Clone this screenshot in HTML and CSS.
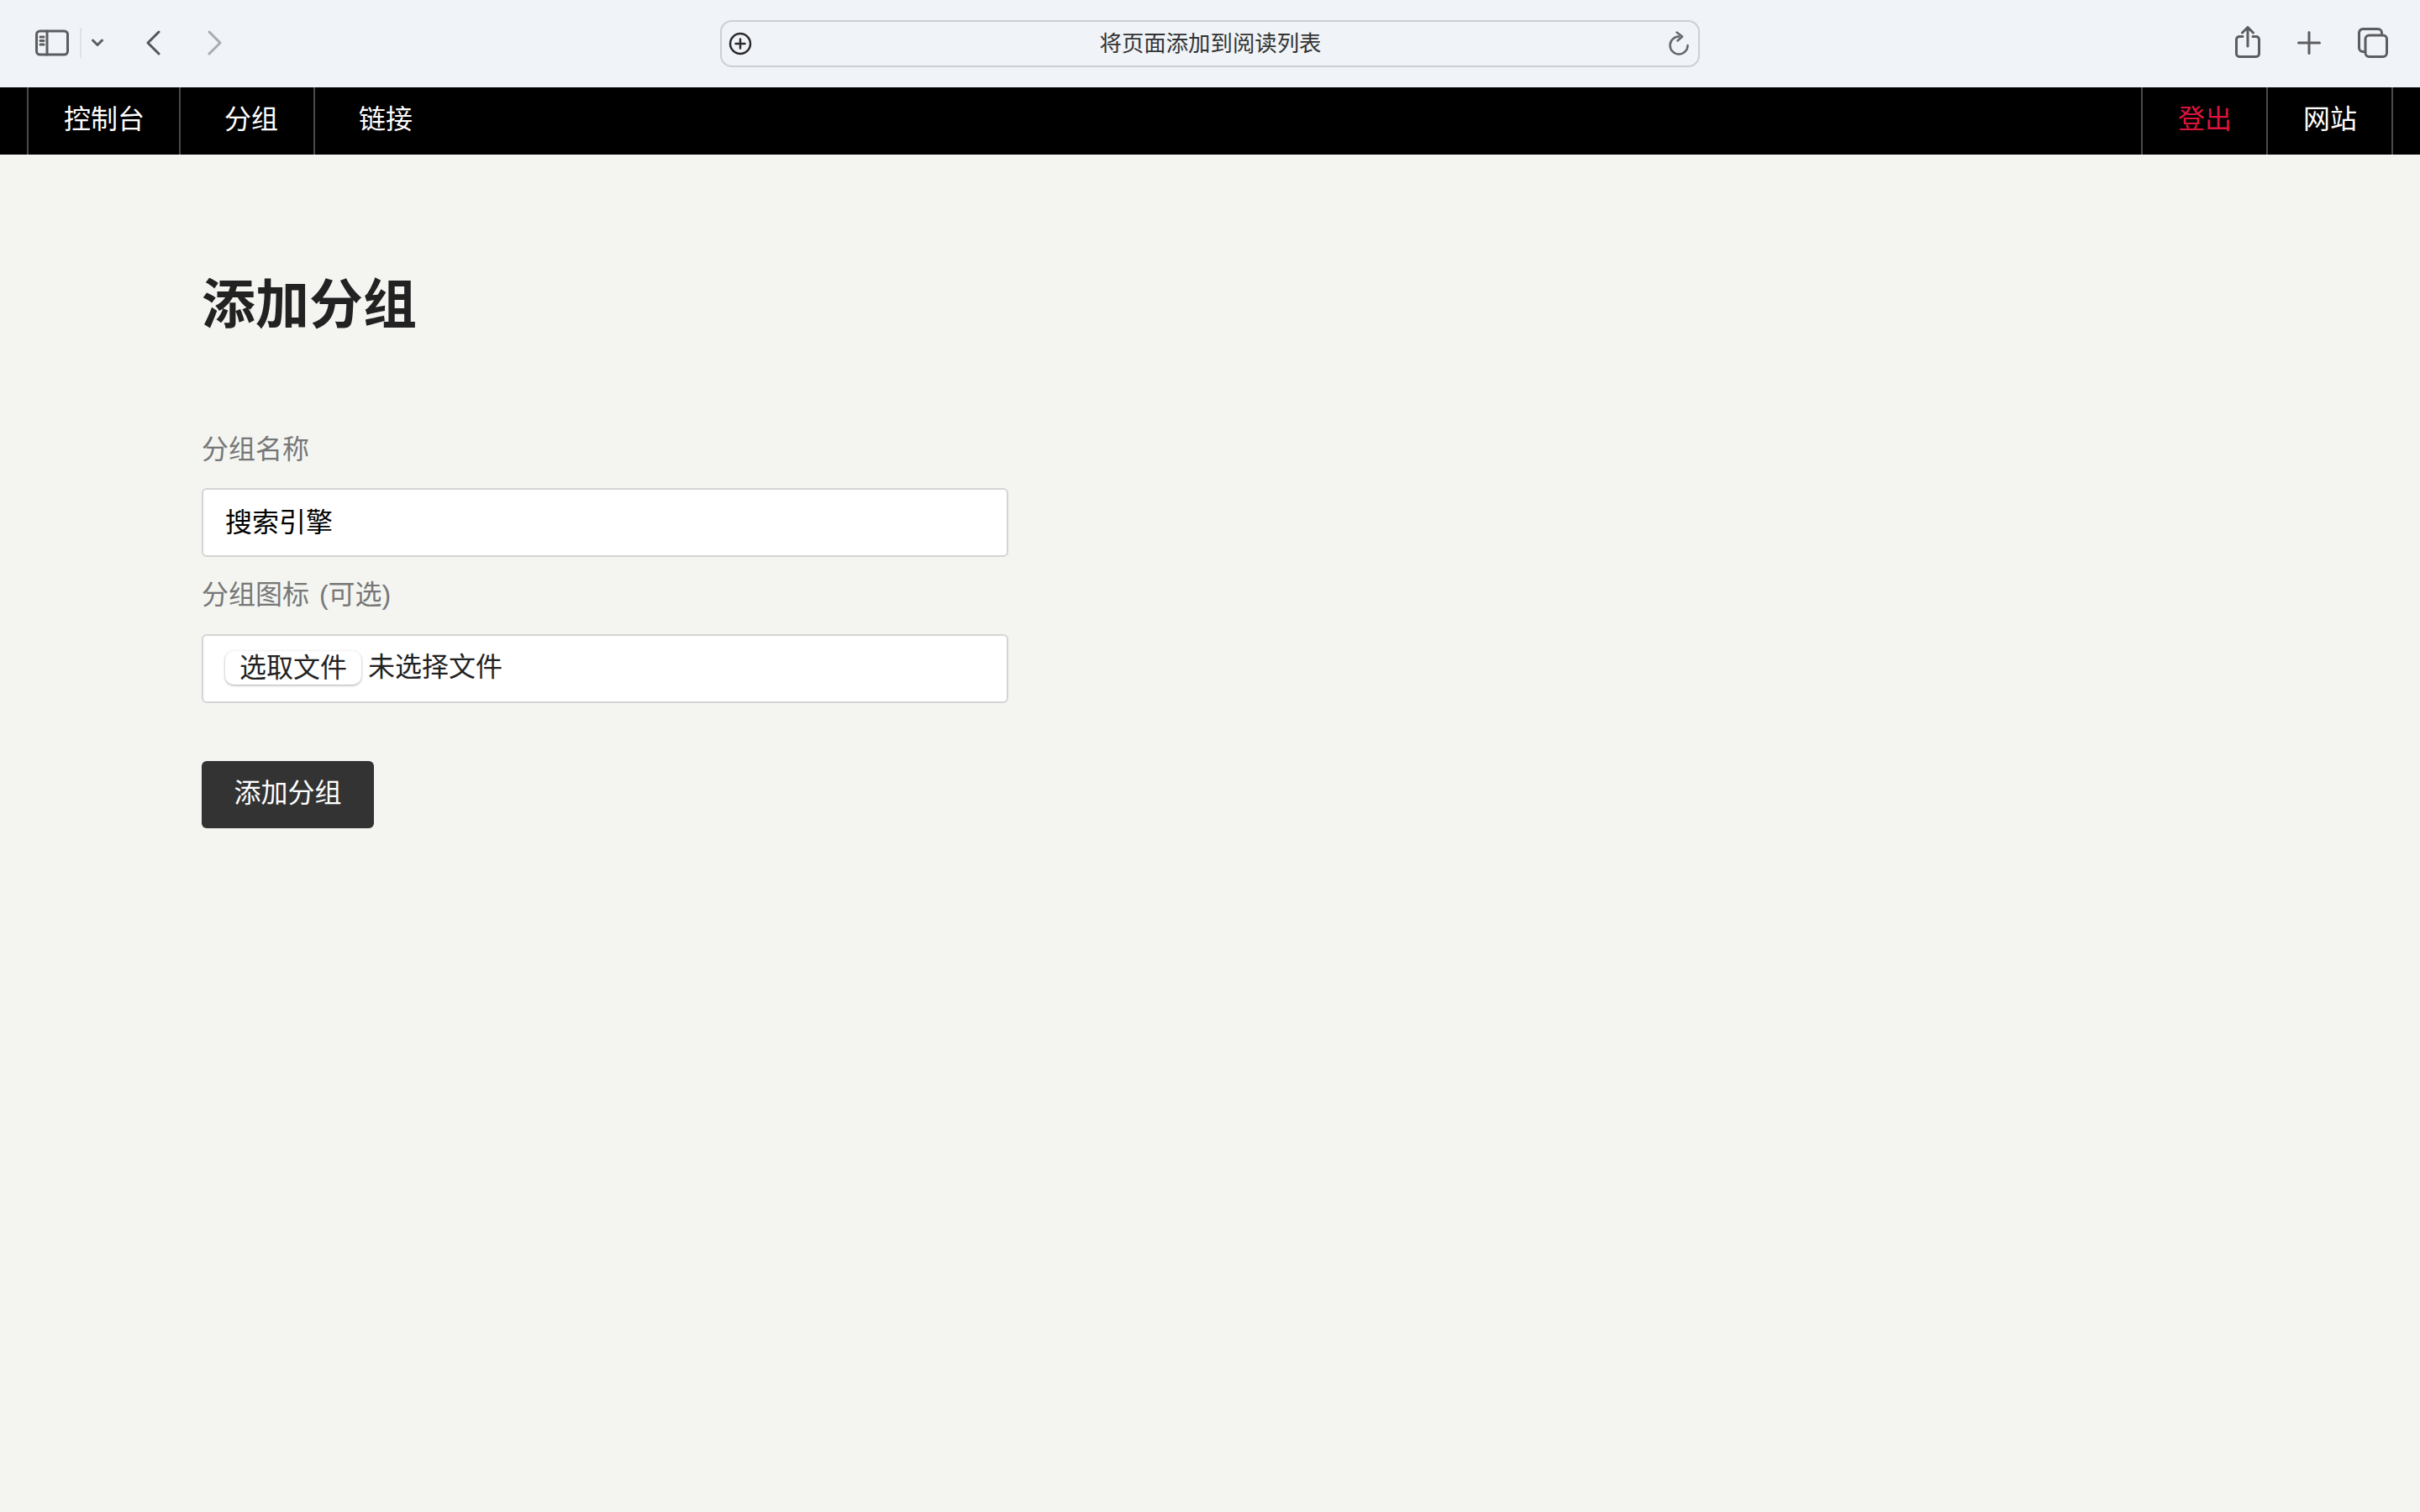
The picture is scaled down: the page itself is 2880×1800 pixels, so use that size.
FILE: index.html
```html
<!DOCTYPE html>
<html lang="zh-CN">
<head>
<meta charset="utf-8">
<title>添加分组</title>
<link rel="stylesheet" href="styles.css">
</head>
<body>
<header class="toolbar">
  <div class="tool-left">
    <svg class="icon sidebar" width="40" height="32" viewBox="0 0 40 32"><rect x="1.500" y="2" width="37" height="28" rx="4"/><path d="M14 2v28M6 9h4M6 13.500h4M6 18h4"/></svg>
    <span class="tool-divider"></span>
    <svg class="icon chevron" width="14" height="10" viewBox="0 0 14 10"><path d="M1.500 2l5.500 5.500L12.500 2"/></svg>
    <svg class="icon back" width="18" height="30" viewBox="0 0 18 30"><path d="M16 2L3 15l13 13"/></svg>
    <svg class="icon forward" width="18" height="30" viewBox="0 0 18 30"><path d="M2 2l13 13L2 28"/></svg>
  </div>
  <div class="urlbar">
    <svg class="icon add-circle" width="28" height="28" viewBox="0 0 28 28"><circle cx="14" cy="14" r="12"/><path d="M14 8.500v11M8.500 14h11"/></svg>
    <span class="url-text">将页面添加到阅读列表</span>
    <svg class="icon reload" width="24" height="30" viewBox="0 0 24 30"><path d="M12 6.500a10.500 10.500 0 1 0 10.500 10.500"/><path d="M9.500 1.500L16 6.500l-5.500 5"/></svg>
  </div>
  <div class="tool-right">
    <svg class="icon share" width="30" height="38" viewBox="0 0 30 38"><path d="M9 12.500H5a3.500 3.500 0 0 0-3.500 3.500v17A3.500 3.500 0 0 0 5 36.500h20a3.500 3.500 0 0 0 3.500-3.500V16a3.500 3.500 0 0 0-3.500-3.500h-4"/><path d="M15 24V2M8.500 8L15 1.500 21.500 8"/></svg>
    <svg class="icon plus" width="28" height="28" viewBox="0 0 28 28"><path d="M14 1.500v25M1.500 14h25"/></svg>
    <svg class="icon tabs" width="36" height="36" viewBox="0 0 36 36"><path d="M7 28.500H6A4.500 4.500 0 0 1 1.500 24V6A4.500 4.500 0 0 1 6 1.500h18A4.500 4.500 0 0 1 28.500 6v1"/><rect x="9" y="9" width="25.500" height="25.500" rx="4.500"/></svg>
  </div>
</header>

<nav class="nav">
  <ul class="nav-list">
    <li class="nav-item first"><a href="#">控制台</a></li>
    <li class="nav-item"><a href="#">分组</a></li>
    <li class="nav-item"><a href="#">链接</a></li>
  </ul>
  <ul class="nav-list right">
    <li class="nav-item first"><a class="danger" href="#">登出</a></li>
    <li class="nav-item first last"><a href="#">网站</a></li>
  </ul>
</nav>

<main class="content">
  <h1 class="title">添加分组</h1>
  <form class="form">
    <label class="field-label" for="name">分组名称</label>
    <input class="field text-field" id="name" type="text" value="搜索引擎">
    <label class="field-label second">分组图标 (可选)</label>
    <div class="field file-field">
      <span class="file-button">选取文件</span>
      <span class="file-name">未选择文件</span>
    </div>
    <button class="submit" type="button">添加分组</button>
  </form>
</main>
</body>
</html>
```

FILE: styles.css
```css
* { box-sizing: border-box; }

html, body {
  margin: 0;
  padding: 0;
}

body {
  min-height: 1800px;
  background: #f4f5f1;
  font-family: "Liberation Sans", "Noto Sans CJK SC", sans-serif;
  font-size: 32px;
  color: #222;
  overflow: hidden;
}

/* Browser chrome */
.toolbar {
  display: grid;
  grid-template-columns: 1fr 1166px 1fr;
  align-items: center;
  height: 104px;
  background: #f0f3f7;
}

.icon {
  display: block;
  flex: none;
  fill: none;
  stroke: #5c5d60;
  stroke-width: 3;
  stroke-linecap: round;
  stroke-linejoin: round;
}

.tool-left {
  display: flex;
  align-items: center;
  padding-left: 42px;
  margin-top: -2px;
}

.sidebar { margin-right: 13px; }

.tool-divider {
  width: 2px;
  height: 36px;
  margin-right: 12px;
  background: #dfe2e5;
}

.chevron { margin-right: 50px; }
.back { margin-right: 56px; stroke: #55565a; }
.forward { stroke: #a9abad; }

.urlbar {
  display: flex;
  align-items: center;
  justify-content: space-between;
  height: 56px;
  margin-top: -1px;
  padding: 0 11px 0 8px;
  border: 2px solid #ccd0d2;
  border-radius: 14px;
}

.add-circle { stroke: #2b2b2d; stroke-width: 2.500; }
.reload { stroke: #66676a; stroke-width: 2.500; }

.url-text {
  font-size: 26.400px;
  line-height: 34px;
  color: #333;
}

.tool-right {
  display: flex;
  align-items: center;
  justify-content: flex-end;
  padding-right: 38px;
  margin-top: -2px;
}

.share { margin-right: 44px; margin-top: -2px; }
.plus { margin-right: 44px; }

/* Site navigation */
.nav {
  display: flex;
  justify-content: space-between;
  height: 80px;
  padding: 0 32px;
  background: #000;
}

.nav-list {
  display: flex;
  margin: 0;
  padding: 0;
  list-style: none;
}

.nav-item {
  border-left: 2px solid #4a4a4a;
  padding: 0 42px 0 52px;
}

.nav-item.first { padding: 0 41px 0 42px; }
.nav-item.last {
  border-right: 2px solid #4a4a4a;
}

.nav-item a {
  display: block;
  line-height: 76px;
  color: #fff;
  text-decoration: none;
}

.nav-item a.danger { color: #dc143c; }

/* Page content */
.content { padding: 139px 240px 0; }

.title {
  margin: 0 0 106px;
  font-size: 64px;
  line-height: 80px;
  font-weight: 700;
  color: #222;
}

.form {
  display: flex;
  flex-direction: column;
  align-items: flex-start;
}

.field-label {
  display: block;
  margin-top: 2px;
  margin-bottom: 22px;
  line-height: 48px;
  word-spacing: 3px;
  color: #777;
}

.field-label.second { margin-top: 21px; margin-bottom: 23px; }

.field {
  width: 960px;
  height: 82px;
  background: #fff;
  border: 2px solid #d4d4d4;
  border-radius: 6px;
}

.text-field {
  padding: 0 26px 6px;
  margin: 0;
  font: inherit;
  color: #000;
  outline: none;
}

.file-field {
  display: flex;
  align-items: center;
  padding: 0 26px;
  margin-bottom: 69px;
}

.file-button {
  width: 162px;
  height: 40px;
  margin-top: -2px;
  margin-right: 8px;
  border-radius: 10px;
  background: #fff;
  box-shadow: 0 1px 3px rgba(0, 0, 0, 0.35);
  line-height: 40px;
  text-align: center;
  color: #222;
}

.file-name { line-height: 40px; margin-top: -4px; color: #222; }

.submit {
  width: 205px;
  height: 80px;
  padding: 0 0 10px;
  border: 0;
  border-radius: 6px;
  background: #333;
  color: #fff;
  font: inherit;
}
```
